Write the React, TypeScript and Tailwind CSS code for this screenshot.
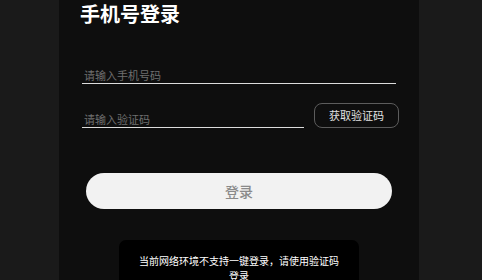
export default function App() {
  return (
    <div
      className="h-[280px] w-full overflow-hidden bg-[#1a1a1a] pl-[59px]"
      style={{ fontFamily: '"Noto Sans CJK SC", "Noto Sans", sans-serif' }}
    >
      <div className="h-full w-[360px] bg-[#0e0e0e]">
        <h1 className="pl-[21px] text-[20px] font-bold leading-[28px] text-white">
          手机号登录
        </h1>

        <div className="mt-[38px] px-[23px]">
          <input
            type="tel"
            placeholder="请输入手机号码"
            className="block h-[18px] w-full border-b border-[#dcdcdc] bg-transparent px-[2px] text-[11px] text-white outline-none placeholder:text-[#6e6e6e]"
          />
        </div>

        <div className="mt-[19px] flex items-end gap-[10px] pl-[23px] pr-[20px]">
          <input
            type="text"
            placeholder="请输入验证码"
            className="block h-[18px] w-[222px] border-b border-[#dcdcdc] bg-transparent px-[2px] text-[11px] text-white outline-none placeholder:text-[#6e6e6e]"
          />
          <button className="h-[25px] w-[85px] rounded-[8px] border border-[#5c5c5c] text-[11px] text-[#e2e2e2]">
            获取验证码
          </button>
        </div>

        <div className="mt-[45px] px-[27px]">
          <button className="block h-[36px] w-full rounded-full bg-[#f2f2f2] text-[14px] font-medium text-[#8a8a8a]">
            登录
          </button>
        </div>

        <div className="mx-auto mt-[31px] w-[240px] rounded-[7px] bg-black px-[17px] pb-[12px] pt-[13px] text-center text-[10px] leading-[15px] text-white">
          当前网络环境不支持一键登录，请使用验证码登录
        </div>
      </div>
    </div>
  );
}
